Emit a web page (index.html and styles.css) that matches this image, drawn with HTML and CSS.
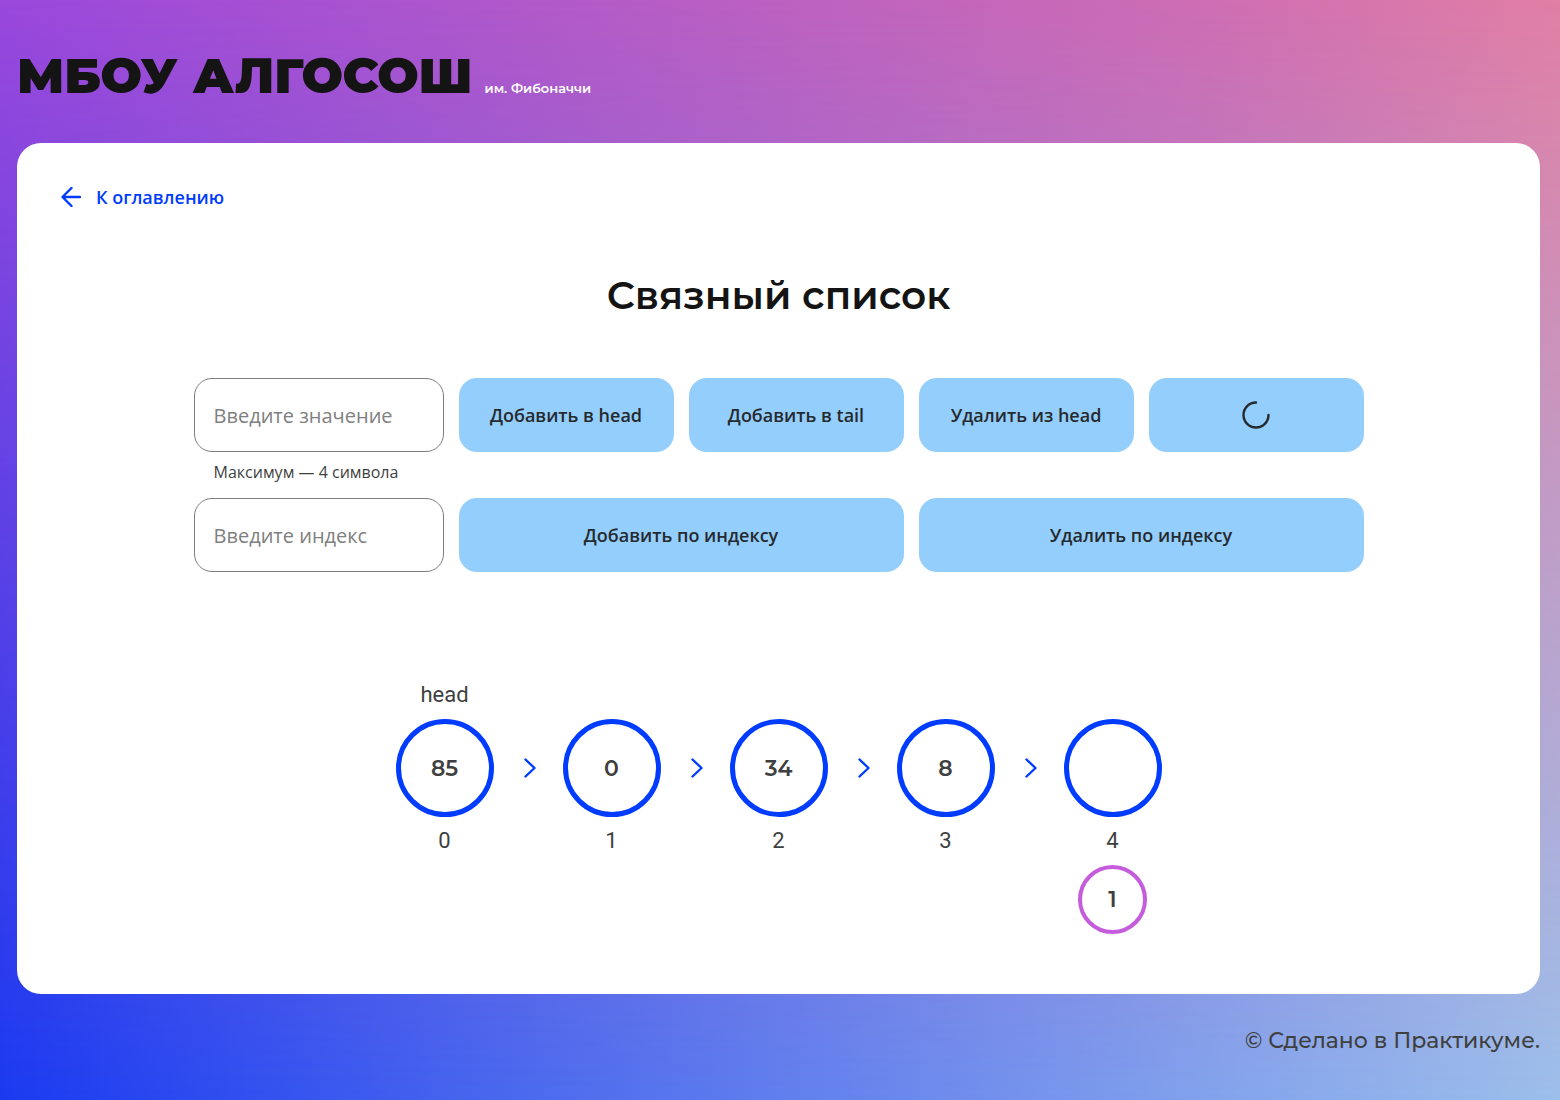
FILE: index.html
```html
<!DOCTYPE html>
<html lang="ru">
<head>
<meta charset="utf-8">
<meta name="viewport" content="width=device-width, initial-scale=1">
<title>Связный список — МБОУ АЛГОСОШ</title>
<link rel="stylesheet" href="styles.css">
</head>
<body class="page">
<header class="header">
  <p class="logo">МБОУ АЛГОСОШ</p>
  <p class="logo-note">им. Фибоначчи</p>
</header>
<main class="card">
  <a class="back" href="#contents">
    <svg class="back-icon" viewBox="0 0 20 20" aria-hidden="true"><path d="M19 10H2M10.500 1L1.500 10L10.500 19"/></svg>
    <span>К оглавлению</span>
  </a>
  <h1 class="title">Связный список</h1>
  <form class="controls">
    <div class="field">
      <input class="input" type="text" maxlength="4" placeholder="Введите значение" aria-label="Значение" aria-describedby="value-hint">
      <span class="hint" id="value-hint">Максимум — 4 символа</span>
    </div>
    <button class="button" type="button">Добавить в head</button>
    <button class="button" type="button">Добавить в tail</button>
    <button class="button" type="button">Удалить из head</button>
    <button class="button" type="button" aria-label="Удалить из tail">
      <svg class="loader" viewBox="0 0 28 28" aria-hidden="true"><path d="M14 1.500A12.500 12.500 0 1 0 26.500 14"/></svg>
    </button>
    <div class="field">
      <input class="input" type="text" placeholder="Введите индекс" aria-label="Индекс">
    </div>
    <button class="button button-wide" type="button">Добавить по индексу</button>
    <button class="button button-wide" type="button">Удалить по индексу</button>
  </form>
  <ol class="list">
    <li class="node"><span class="label">head</span><span class="circle">85</span><span class="label">0</span></li>
    <li class="arrow"><svg class="arrow-icon" viewBox="0 0 12 20" aria-hidden="true"><path d="M1.500 1.500L10.500 10L1.500 18.500"/></svg></li>
    <li class="node"><span class="label"></span><span class="circle">0</span><span class="label">1</span></li>
    <li class="arrow"><svg class="arrow-icon" viewBox="0 0 12 20" aria-hidden="true"><path d="M1.500 1.500L10.500 10L1.500 18.500"/></svg></li>
    <li class="node"><span class="label"></span><span class="circle">34</span><span class="label">2</span></li>
    <li class="arrow"><svg class="arrow-icon" viewBox="0 0 12 20" aria-hidden="true"><path d="M1.500 1.500L10.500 10L1.500 18.500"/></svg></li>
    <li class="node"><span class="label"></span><span class="circle">8</span><span class="label">3</span></li>
    <li class="arrow"><svg class="arrow-icon" viewBox="0 0 12 20" aria-hidden="true"><path d="M1.500 1.500L10.500 10L1.500 18.500"/></svg></li>
    <li class="node"><span class="label"></span><span class="circle"></span><span class="label">4</span><span class="circle circle-small">1</span></li>
  </ol>
</main>
<footer class="footer">© Сделано в Практикуме.</footer>
</body>
</html>
```
FILE: styles.css
```css
*, *::before {
  box-sizing: border-box;
}

.page {
  --display: Montserrat, Inter, sans-serif;
  --text: "Segoe UI", "Open Sans", sans-serif;
  --blue: #003cff;
  display: flex;
  flex-direction: column;
  min-height: 100vh;
  margin: 0;
  padding: 0 20px 0 17px;
  position: relative;
  color: #3f3f3f;
  font-family: var(--display);
  background: linear-gradient(to right, #9a48dc, #bb60c2 48%, #cf6eb3 78%, #e17fa5);
}

/* lower half of the backdrop, faded into the upper one */
.page::before {
  content: "";
  position: absolute;
  inset: 0;
  z-index: -1;
  background: linear-gradient(to right, #1a3af0, #4766ee 31%, #6f8eed 62%, #9cbfeb);
  mask-image: linear-gradient(to bottom, transparent, rgb(0 0 0 / 34%) 34%, #000);
}

.header {
  display: flex;
  align-items: baseline;
  gap: 12px;
  height: 143px;
  padding-top: 46px;
}

.logo {
  margin: 0;
  color: #141414;
  font-size: 49px;
  font-weight: 900;
  line-height: 60px;
}

.logo-note {
  margin: 0;
  color: #fff;
  font-size: 13px;
  font-weight: 600;
}

.card {
  flex: 1;
  padding: 40px 44px 60px;
  border-radius: 24px;
  background: #fff;
}

.back {
  display: inline-flex;
  align-items: center;
  gap: 15px;
  color: var(--blue);
  font-family: var(--text);
  font-size: 18px;
  font-weight: 600;
  line-height: 28px;
  text-decoration: none;
}

.back-icon {
  width: 20px;
  height: 20px;
}

.back-icon path,
.arrow-icon path {
  fill: none;
  stroke: var(--blue);
  stroke-width: 2.4;
  stroke-linecap: round;
  stroke-linejoin: round;
}

.title {
  margin: 60px 0 59px;
  color: #141414;
  font-size: 39px;
  font-weight: 600;
  line-height: 48px;
  text-align: center;
}

.controls {
  display: grid;
  grid-template-columns: 250fr repeat(4, 215fr);
  gap: 14px 15px;
  max-width: 1170px;
  margin: 0 auto;
}

.field {
  display: flex;
  flex-direction: column;
  gap: 8px;
  min-width: 0;
}

.input {
  width: 100%;
  height: 74px;
  padding: 0 19px;
  border: 1px solid #7d7d7d;
  border-radius: 18px;
  background: #fff;
  color: #3f3f3f;
  font-family: var(--text);
  font-size: 20px;
}

.input::placeholder {
  color: #808080;
  opacity: 1;
}

.hint {
  padding-left: 20px;
  font-family: var(--text);
  font-size: 16px;
  line-height: 24px;
}

.button {
  display: flex;
  align-items: center;
  justify-content: center;
  height: 74px;
  padding: 0 12px;
  border: 0;
  border-radius: 18px;
  background: #94cefc;
  color: #252a2e;
  font-family: var(--text);
  font-size: 18px;
  font-weight: 600;
}

.button-wide {
  grid-column: span 2;
}

.loader {
  width: 28px;
  height: 28px;
}

.loader path {
  fill: none;
  stroke: #252a2e;
  stroke-width: 2.4;
  stroke-linecap: round;
}

.list {
  display: flex;
  justify-content: center;
  margin: 108px 0 0;
  padding: 0;
  list-style: none;
}

.node {
  display: flex;
  flex-direction: column;
  align-items: center;
  gap: 9px;
  width: 98px;
}

.label {
  height: 30px;
  font-family: Roboto, sans-serif;
  font-size: 22px;
  line-height: 30px;
}

.circle {
  display: flex;
  align-items: center;
  justify-content: center;
  width: 98px;
  height: 98px;
  border: 5px solid var(--blue);
  border-radius: 50%;
  font-size: 22px;
  font-weight: 600;
}

.circle-small {
  width: 69px;
  height: 69px;
  border: 4px solid #c45cdb;
}

.arrow {
  display: flex;
  justify-content: center;
  width: 69px;
  padding: 78px 0 0 3px;
}

.arrow-icon {
  width: 12px;
  height: 20px;
}

.footer {
  height: 106px;
  padding-top: 33px;
  font-size: 22px;
  font-weight: 500;
  line-height: 28px;
  text-align: right;
}
```
